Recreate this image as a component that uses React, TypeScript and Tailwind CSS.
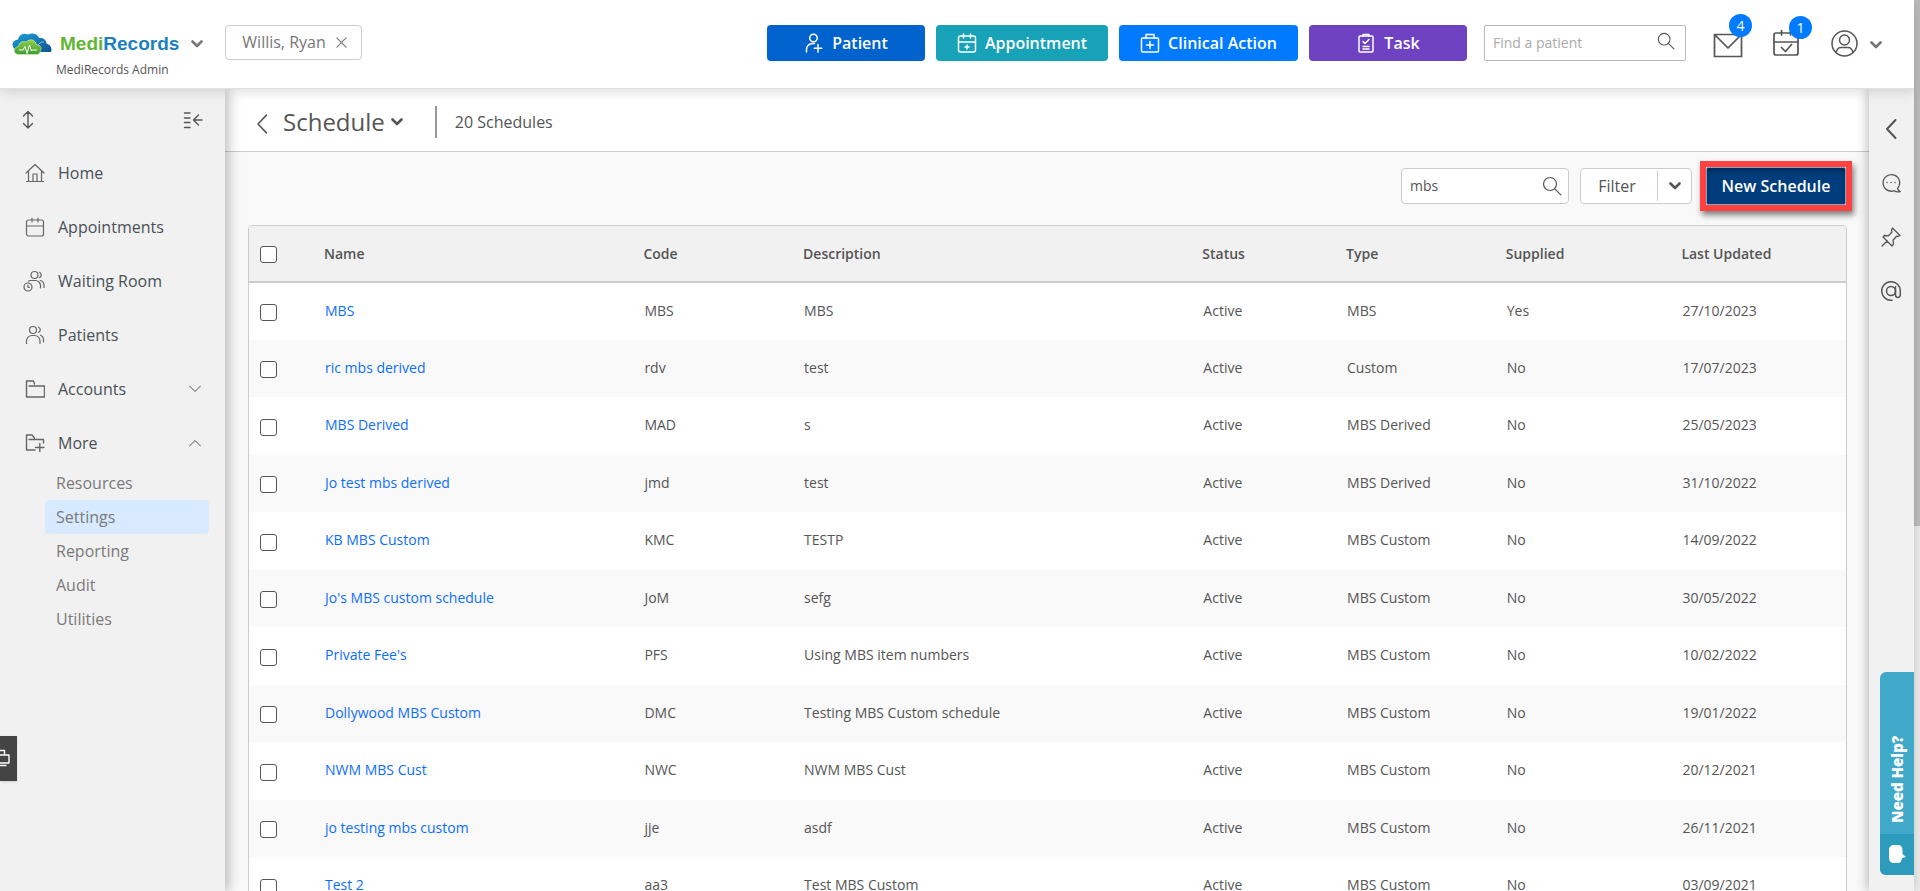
import type { ReactNode } from "react";
import clsx from "clsx";

interface Schedule {
  name: string;
  code: string;
  description: string;
  type: string;
  supplied: string;
  updated: string;
}

interface NavItem {
  label: string;
  icon: ReactNode;
  chevron?: "up" | "down";
}

interface IconProps {
  children: ReactNode;
  className?: string;
  box?: string;
  width?: number;
}

const schedules: Schedule[] = [
  { name: "MBS", code: "MBS", description: "MBS", type: "MBS", supplied: "Yes", updated: "27/10/2023" },
  { name: "ric mbs derived", code: "rdv", description: "test", type: "Custom", supplied: "No", updated: "17/07/2023" },
  { name: "MBS Derived", code: "MAD", description: "s", type: "MBS Derived", supplied: "No", updated: "25/05/2023" },
  { name: "Jo test mbs derived", code: "jmd", description: "test", type: "MBS Derived", supplied: "No", updated: "31/10/2022" },
  { name: "KB MBS Custom", code: "KMC", description: "TESTP", type: "MBS Custom", supplied: "No", updated: "14/09/2022" },
  { name: "Jo's MBS custom schedule", code: "JoM", description: "sefg", type: "MBS Custom", supplied: "No", updated: "30/05/2022" },
  { name: "Private Fee's", code: "PFS", description: "Using MBS item numbers", type: "MBS Custom", supplied: "No", updated: "10/02/2022" },
  { name: "Dollywood MBS Custom", code: "DMC", description: "Testing MBS Custom schedule", type: "MBS Custom", supplied: "No", updated: "19/01/2022" },
  { name: "NWM MBS Cust", code: "NWC", description: "NWM MBS Cust", type: "MBS Custom", supplied: "No", updated: "20/12/2021" },
  { name: "jo testing mbs custom", code: "jje", description: "asdf", type: "MBS Custom", supplied: "No", updated: "26/11/2021" },
  { name: "Test 2", code: "aa3", description: "Test MBS Custom", type: "MBS Custom", supplied: "No", updated: "03/09/2021" },
];

const columns = [
  { label: "Name", width: "w-[20%]" },
  { label: "Code", width: "w-[10%]" },
  { label: "Description", width: "w-[25%]" },
  { label: "Status", width: "w-[9%]" },
  { label: "Type", width: "w-[10%]" },
  { label: "Supplied", width: "w-[11%]" },
  { label: "Last Updated", width: "" },
];

const Icon = ({ children, className, box = "0 0 20 20", width = 1.2 }: IconProps) => (
  <svg
    viewBox={box}
    fill="none"
    stroke="currentColor"
    strokeWidth={width}
    strokeLinecap="round"
    strokeLinejoin="round"
    aria-hidden="true"
    className={clsx("shrink-0", className)}
  >
    {children}
  </svg>
);

const Chevron = ({ className }: { className?: string }) => (
  <Icon box="0 0 12 8" width={2.6} className={clsx("h-2 w-3", className)}>
    <path d="M1.500 1.500 6 6l4.500-4.500" />
  </Icon>
);

const SearchIcon = ({ className }: { className?: string }) => (
  <Icon className={className}>
    <circle cx="8" cy="8" r="6.500" />
    <path d="m12.800 12.800 6 6" />
  </Icon>
);

const Folder = ({ plus }: { plus?: boolean }) => (
  <Icon className="size-5" width={1.4}>
    {plus ? (
      <path d="M10 17H1.500V2H7l2.500 3M4 6.500h14.500V10M10.500 14.500h8.500M14.800 10.500v8" />
    ) : (
      <path d="M9.500 5 8.500 2h-7v16h18V7H4" />
    )}
  </Icon>
);

const nav: NavItem[] = [
  {
    label: "Home",
    icon: (
      <Icon className="size-5">
        <path d="m1 10 9-8.500 9 8.500M3.500 8.500v10M16.500 8.500v10M1.500 18.500h17M8 18.500V11h4v7.500" />
      </Icon>
    ),
  },
  {
    label: "Appointments",
    icon: (
      <Icon className="size-5">
        <rect x="1.500" y="3" width="17" height="16" rx="2" />
        <path d="M1.500 9h17M7 1v4M13 1v4" />
      </Icon>
    ),
  },
  {
    label: "Waiting Room",
    icon: (
      <Icon className="size-5 overflow-visible">
        <circle cx="9.500" cy="4" r="3.500" />
        <path d="M5 9.500h5.500a5 5 0 0 1 5 5V17M14.500 1.300a2.900 2.900 0 0 1 0 5.300M15.500 9.500a5 5 0 0 1 3.500 4.500v2.500M3.500 10.200 5 9.500" />
        <circle cx="3" cy="16" r="4" />
        <path d="M3 14v2.300h1.300" />
      </Icon>
    ),
  },
  {
    label: "Patients",
    icon: (
      <Icon className="size-5">
        <circle cx="8" cy="5" r="3.500" />
        <path d="M1.500 18.500V16A5.500 5.500 0 0 1 7 10.500h2.500A5.500 5.500 0 0 1 15 16v2.500M13.500 2.200a2.800 2.800 0 0 1 0 5.200M15.500 10.200a5 5 0 0 1 3 4.800v2" />
      </Icon>
    ),
  },
  { label: "Accounts", icon: <Folder />, chevron: "down" },
  { label: "More", icon: <Folder plus />, chevron: "up" },
];

const moreItems = ["Resources", "Settings", "Reporting", "Audit", "Utilities"];

const actions = [
  {
    label: "Patient",
    style: "w-[158px] bg-[#0062cc]",
    icon: (
      <Icon className="size-5" width={1.5}>
        <circle cx="9.500" cy="5" r="3.800" />
        <path d="M2.500 19v-2.500a6 6 0 0 1 6-6h2M14 11.500v7.500M10.300 15.300h7.500" />
      </Icon>
    ),
  },
  {
    label: "Appointment",
    style: "w-[172px] bg-[#17a2b8]",
    icon: (
      <Icon className="size-5" width={1.5}>
        <rect x="1.500" y="3" width="17" height="16" rx="2" />
        <path d="M1.500 9h17M6.500 1v4M13.500 1v4M10 12v4M8 14h4" />
      </Icon>
    ),
  },
  {
    label: "Clinical Action",
    style: "w-[179px] bg-[#007bff]",
    icon: (
      <Icon className="size-5" width={1.5}>
        <rect x="1.500" y="5" width="17" height="14" rx="1" />
        <path d="M6 5V1.500h8V5M10 8.500v7M6.500 12h7" />
      </Icon>
    ),
  },
  {
    label: "Task",
    style: "w-[158px] bg-[#6f42c1]",
    icon: (
      <Icon className="size-5" width={1.5}>
        <rect x="3" y="3" width="14" height="16" rx="1" />
        <path d="M7 3V1.500h6V3M7 8.500l2 2 4-4M7 13.500h6M7 16h6" />
      </Icon>
    ),
  },
];

const Logo = () => (
  <svg viewBox="0 0 40 22" className="h-[22px] w-10 shrink-0" aria-hidden="true">
    <defs>
      <linearGradient id="cloud" x1="0" y1="0" x2="1" y2="1">
        <stop offset="0" stopColor="#1ba0dc" />
        <stop offset="1" stopColor="#11528f" />
      </linearGradient>
      <linearGradient id="leaf" x1="0" y1="0" x2="0" y2="1">
        <stop offset="0" stopColor="#8fd14a" />
        <stop offset="1" stopColor="#3f9c2d" />
      </linearGradient>
    </defs>
    <path
      fill="url(#cloud)"
      d="M2.500 16C-1 12 0 7.500 6 6.500 7 2 11-.5 16 1.500c5-2 9.500-.5 11 3.500 5-.5 7 2 7.500 5.500 4 1 6 5 4.500 8.500H6z"
    />
    <path d="M32 9c-3.500 0-5.500 1.500-6 4" fill="none" stroke="#9ed4f2" strokeWidth=".8" />
    <path
      fill="url(#leaf)"
      stroke="#d5efc0"
      strokeWidth=".6"
      d="M6.500 21.500c-6-.5-5.500-7.500 0-8 .5-4 4-6 7.500-4.500 4-4 10-2 10.500 3 4-.5 5.500 3 4 5.500-.3 2.500-1.500 4-4 4z"
    />
    <path d="M7 17h4l2-3.500 2 7 2.500-8.500 2 6 1-1H25" fill="none" stroke="#fff" strokeWidth="1" />
  </svg>
);

const Badge = ({ children }: { children: ReactNode }) => (
  <span className="absolute -top-3.5 left-4 flex size-[23px] items-center justify-center rounded-full bg-[#007bff] text-sm text-white">
    {children}
  </span>
);

const TopBar = () => (
  <header className="relative z-20 flex h-[89px] shrink-0 items-start border-b border-[#e0e0e0] bg-white pr-8 pl-3 shadow-[0_2px_12px_rgba(0,0,0,0.15)]">
    <div className="flex flex-col pt-[30px]">
      <div className="flex items-center">
        <Logo />
        <a href="#home" className="ml-2 font-['Liberation_Sans'] text-[19px] leading-7 font-bold text-[#1c80c0]">
          <span className="text-[#62b534]">Medi</span>Records
        </a>
        <button aria-label="Switch practice" className="ml-3 text-[#777]">
          <Chevron />
        </button>
      </div>
      <span className="ml-11 text-xs leading-6 font-medium">MediRecords Admin</span>
    </div>
    <div className="mt-[25px] ml-[22px] flex h-[35px] items-center gap-2.5 rounded border border-[#ccc] pr-3.5 pl-4 text-base text-[#777]">
      <span className="-mt-0.5">Willis, Ryan</span>
      <button aria-label="Close Willis, Ryan">
        <Icon box="0 0 12 12" className="size-[11px]">
          <path d="m1 1 10 10M11 1 1 11" />
        </Icon>
      </button>
    </div>
    <div className="mt-[25px] ml-auto flex items-center">
      <div className="flex gap-[11px]">
        {actions.map(({ label, style, icon }) => (
          <button
            key={label}
            className={clsx(
              "flex h-9 items-center justify-center gap-2 rounded text-base font-semibold text-white",
              style
            )}
          >
            {icon}
            {label}
          </button>
        ))}
      </div>
      <label className="ml-[17px] flex h-9 w-[202px] items-center rounded-xs border border-[#bbb] pr-2.5 pl-2">
        <input
          aria-label="Find a patient"
          placeholder="Find a patient"
          className="min-w-0 flex-1 text-sm outline-none placeholder:text-[#aaa]"
        />
        <SearchIcon className="mb-1 size-[18px]" />
      </label>
      <button aria-label="Messages" className="relative ml-[27px]">
        <Icon box="0 0 30 26" width={1.7} className="mt-1 h-[26px] w-[30px]">
          <path d="M1.500 2.500h27v22h-27zM2 3l13 13L28 3" />
        </Icon>
        <Badge>4</Badge>
      </button>
      <button aria-label="Tasks due" className="relative ml-[30px]">
        <Icon box="0 0 26 26" width={1.7} className="size-[26px]">
          <rect x="1" y="3" width="24" height="22" rx="2" />
          <path d="M1 12h24M8.500 0v5M17.500 0v5M8.500 17.500l4 4 6-7" />
        </Icon>
        <Badge>1</Badge>
      </button>
      <button aria-label="Account" className="ml-8 flex items-center gap-3">
        <Icon box="0 0 27 27" width={1.5} className="size-[27px]">
          <circle cx="13.500" cy="13.500" r="12.500" />
          <circle cx="13.500" cy="10" r="5" />
          <path d="M5 22.500c1-4 3-5 5-5h7c2 0 4 1 5 5" />
        </Icon>
        <Chevron className="mt-1 text-[#777]" />
      </button>
    </div>
  </header>
);

const Sidebar = () => (
  <aside className="relative z-10 w-[225px] shrink-0 bg-[#f1f1f1] shadow-[3px_0_12px_rgba(0,0,0,0.28)]">
    <div className="flex h-[57px] items-center justify-between px-[22px] pt-1">
      <button aria-label="Resize menu">
        <Icon box="0 0 12 20" width={1.4} className="h-5 w-3">
          <path d="M6 1.500v16M1.500 6 6 1.500 10.500 6M1.500 13.500 6 18l4.500-4.500" />
        </Icon>
      </button>
      <button aria-label="Collapse menu">
        <Icon className="size-5" width={1.4}>
          <path d="M1.500 3H7M1.500 8H7M1.500 12.500H7M1.500 17.500H7M10.500 10H19M15.500 5l-5 5 5 5" />
        </Icon>
      </button>
    </div>
    <nav>
      {nav.map(({ label, icon, chevron }) => (
        <a
          key={label}
          href={`#${label}`}
          className="flex h-[54px] items-center gap-[13px] pr-6 pl-[25px] text-base font-medium text-[#495057]"
        >
          <span className="text-[#666]">{icon}</span>
          {label}
          {chevron && (
            <Icon box="0 0 12 8" width={1} className={clsx("ml-auto h-2 w-3", chevron === "up" && "rotate-180")}>
              <path d="m.5 1 5.500 5.500L11.500 1" />
            </Icon>
          )}
        </a>
      ))}
      <ul className="-mt-1 mr-4 ml-[45px]">
        {moreItems.map((item) => (
          <li key={item}>
            <a
              href={`#${item}`}
              className={clsx(
                "flex h-[34px] items-center rounded px-[11px] text-base font-medium text-[#7a7a7a]",
                item === "Settings" && "bg-[#d8eaff]"
              )}
            >
              {item}
            </a>
          </li>
        ))}
      </ul>
    </nav>
    <button
      aria-label="Print queue"
      className="absolute top-[647px] left-0 h-[45px] w-[17px] bg-[#444] text-white shadow"
    >
      <Icon box="0 0 17 45" width={1.4} className="h-[45px] w-[17px]">
        <path d="M0 14.500h4.500V19M0 19h9v8H0M0 29.500h6" />
      </Icon>
    </button>
  </aside>
);

const CheckBox = ({ label }: { label: string }) => (
  <input
    type="checkbox"
    aria-label={label}
    className="mt-0.5 block size-[17px] appearance-none rounded-[3px] border border-[#555] bg-white"
  />
);

const ScheduleTable = () => (
  <div className="mr-[22px] ml-[23px] mt-[21px] overflow-hidden rounded-t border border-[#ccc] bg-white">
    <table className="w-full table-fixed border-collapse text-left text-sm">
      <thead>
        <tr className="h-14 border-b-2 border-[#ccc] bg-[#f1f1f1]">
          <th className="w-[67px] pl-[11px]">
            <CheckBox label="Select all schedules" />
          </th>
          {columns.map(({ label, width }) => (
            <th key={label} className={clsx("px-2 font-semibold", width)}>
              {label}
            </th>
          ))}
        </tr>
      </thead>
      <tbody className="font-medium">
        {schedules.map(({ name, code, description, type, supplied, updated }) => (
          <tr key={name} className="h-[58px] even:h-[57px] even:bg-[#f9f9f9]">
            <td className="pl-[11px]">
              <CheckBox label={`Select ${name}`} />
            </td>
            <td className="px-[9px] pb-0.5">
              <a href="#schedule" className="text-[#0d6efd]">
                {name}
              </a>
            </td>
            <td className="px-[9px] pb-0.5">{code}</td>
            <td className="px-[9px] pb-0.5">{description}</td>
            <td className="px-[9px] pb-0.5">Active</td>
            <td className="px-[9px] pb-0.5">{type}</td>
            <td className="px-[9px] pb-0.5">{supplied}</td>
            <td className="px-[9px] pb-0.5">{updated}</td>
          </tr>
        ))}
      </tbody>
    </table>
  </div>
);

const Main = () => (
  <main className="min-w-0 flex-1 bg-[#f9f9f9]">
    <div className="flex h-[63px] items-center border-b border-[#ccc] bg-white pt-1 pl-8">
      <a href="#back" aria-label="Back">
        <Icon box="0 0 10 20" width={1.6} className="mt-1 h-5 w-[10px]">
          <path d="M9.500 1 1 10l8.500 9" />
        </Icon>
      </a>
      <button className="ml-4 flex items-center gap-1.5">
        <h1 className="text-2xl font-medium">Schedule</h1>
        <Chevron />
      </button>
      <div className="ml-8 h-8 w-0.5 bg-[#999]" />
      <span className="ml-[18px] text-base font-medium">20 Schedules</span>
    </div>
    <div className="mt-4 mr-[17px] flex items-center justify-end">
      <label className="flex h-9 w-[168px] items-center rounded border border-[#ccc] bg-white pr-1.5 pl-2">
        <input
          aria-label="Search schedules"
          defaultValue="mbs"
          className="min-w-0 flex-1 text-sm font-medium outline-none"
        />
        <SearchIcon className="size-5" />
      </label>
      <div className="ml-[11px] flex h-9 w-28 items-center rounded border border-[#ccc] bg-white">
        <button className="flex-1 pr-1 text-base font-medium">Filter</button>
        <button aria-label="Filter options" className="flex h-[30px] w-[34px] items-center justify-center border-l border-[#ccc]">
          <Chevron />
        </button>
      </div>
      <div className="-my-2 ml-2 border-6 border-[#ff4141] shadow-[2px_4px_6px_rgba(0,0,0,0.5)]">
        <button className="block h-[38px] w-[140px] rounded-xs border border-[#8aa5c4] bg-[#003d7d] text-base font-semibold text-white shadow-[inset_0_3px_5px_rgba(0,0,0,0.3)]">
          New Schedule
        </button>
      </div>
    </div>
    <ScheduleTable />
  </main>
);

const RightRail = () => (
  <aside className="relative z-10 flex w-[45px] shrink-0 flex-col items-center bg-[#f1f1f1] pt-[30px] pr-0.5 shadow-[-2px_0_10px_rgba(0,0,0,0.25)]">
    <button aria-label="Expand panel">
      <Icon box="0 0 12 20" width={2} className="h-5 w-3">
        <path d="M10.500 1 2 10l8.500 9" />
      </Icon>
    </button>
    <div className="mt-[34px] flex flex-col gap-[34px]">
      <button aria-label="Comments">
        <Icon className="size-5" width={1.3}>
          <path d="M16.500 15.500a8.300 8.300 0 1 0-3.300 2.200c2 1.300 4 1.300 6 .8-1.500-.8-2.300-1.800-2.700-3Z" />
          <path d="M6 9.500h.1M10 9.500h.1M14 9.500h.1" />
        </Icon>
      </button>
      <button aria-label="Pinned">
        <Icon className="size-5" width={1.3}>
          <path d="m11.500 1 7.500 7.500-2 1-1.500-.3-3.500 4 .5 4-1.500 1.800L2 10l1.500-1.500 4 .3 3.500-3.800-.5-2zM6.300 14 1 19" />
        </Icon>
      </button>
      <button aria-label="Mentions">
        <Icon className="size-5" width={1.5}>
          <circle cx="10" cy="10" r="4.500" />
          <path d="M14.500 5.700V14a2.400 2.400 0 0 0 4.800 0v-4A9.300 9.300 0 1 0 11 19.200" />
        </Icon>
      </button>
    </div>
    <button className="absolute right-0 bottom-4 flex h-[203px] w-[34px] rotate-180 items-center justify-start overflow-hidden rounded-r-md bg-[#40a9c9] font-extrabold text-white [writing-mode:vertical-rl]">
      <span className="flex h-[41px] w-full items-center justify-center bg-[#2d9cbc]">
        <svg viewBox="0 0 20 20" className="size-5 rotate-180" aria-hidden="true">
          <path fill="#fff" d="M7 1h4c3 0 4.500 2 4.500 5v4l3.500 3-4 1c-.5 3-1.500 5-4 5H7c-3 0-5-2-5-5V6c0-3 2-5 5-5Z" />
        </svg>
      </span>
      <span className="mt-[11px] text-[15px] leading-5">Need Help?</span>
    </button>
  </aside>
);

export default function App() {
  return (
    <div className="flex h-screen overflow-hidden bg-white font-['Open_Sans',sans-serif] text-[#555]">
      <div className="flex min-w-0 flex-1 flex-col">
        <TopBar />
        <div className="flex min-h-0 flex-1">
          <Sidebar />
          <Main />
          <RightRail />
        </div>
      </div>
      <div className="w-1.5 shrink-0 bg-[#ebebeb]">
        <div className="h-[59%] bg-[#bcbcbc]" />
      </div>
    </div>
  );
}
